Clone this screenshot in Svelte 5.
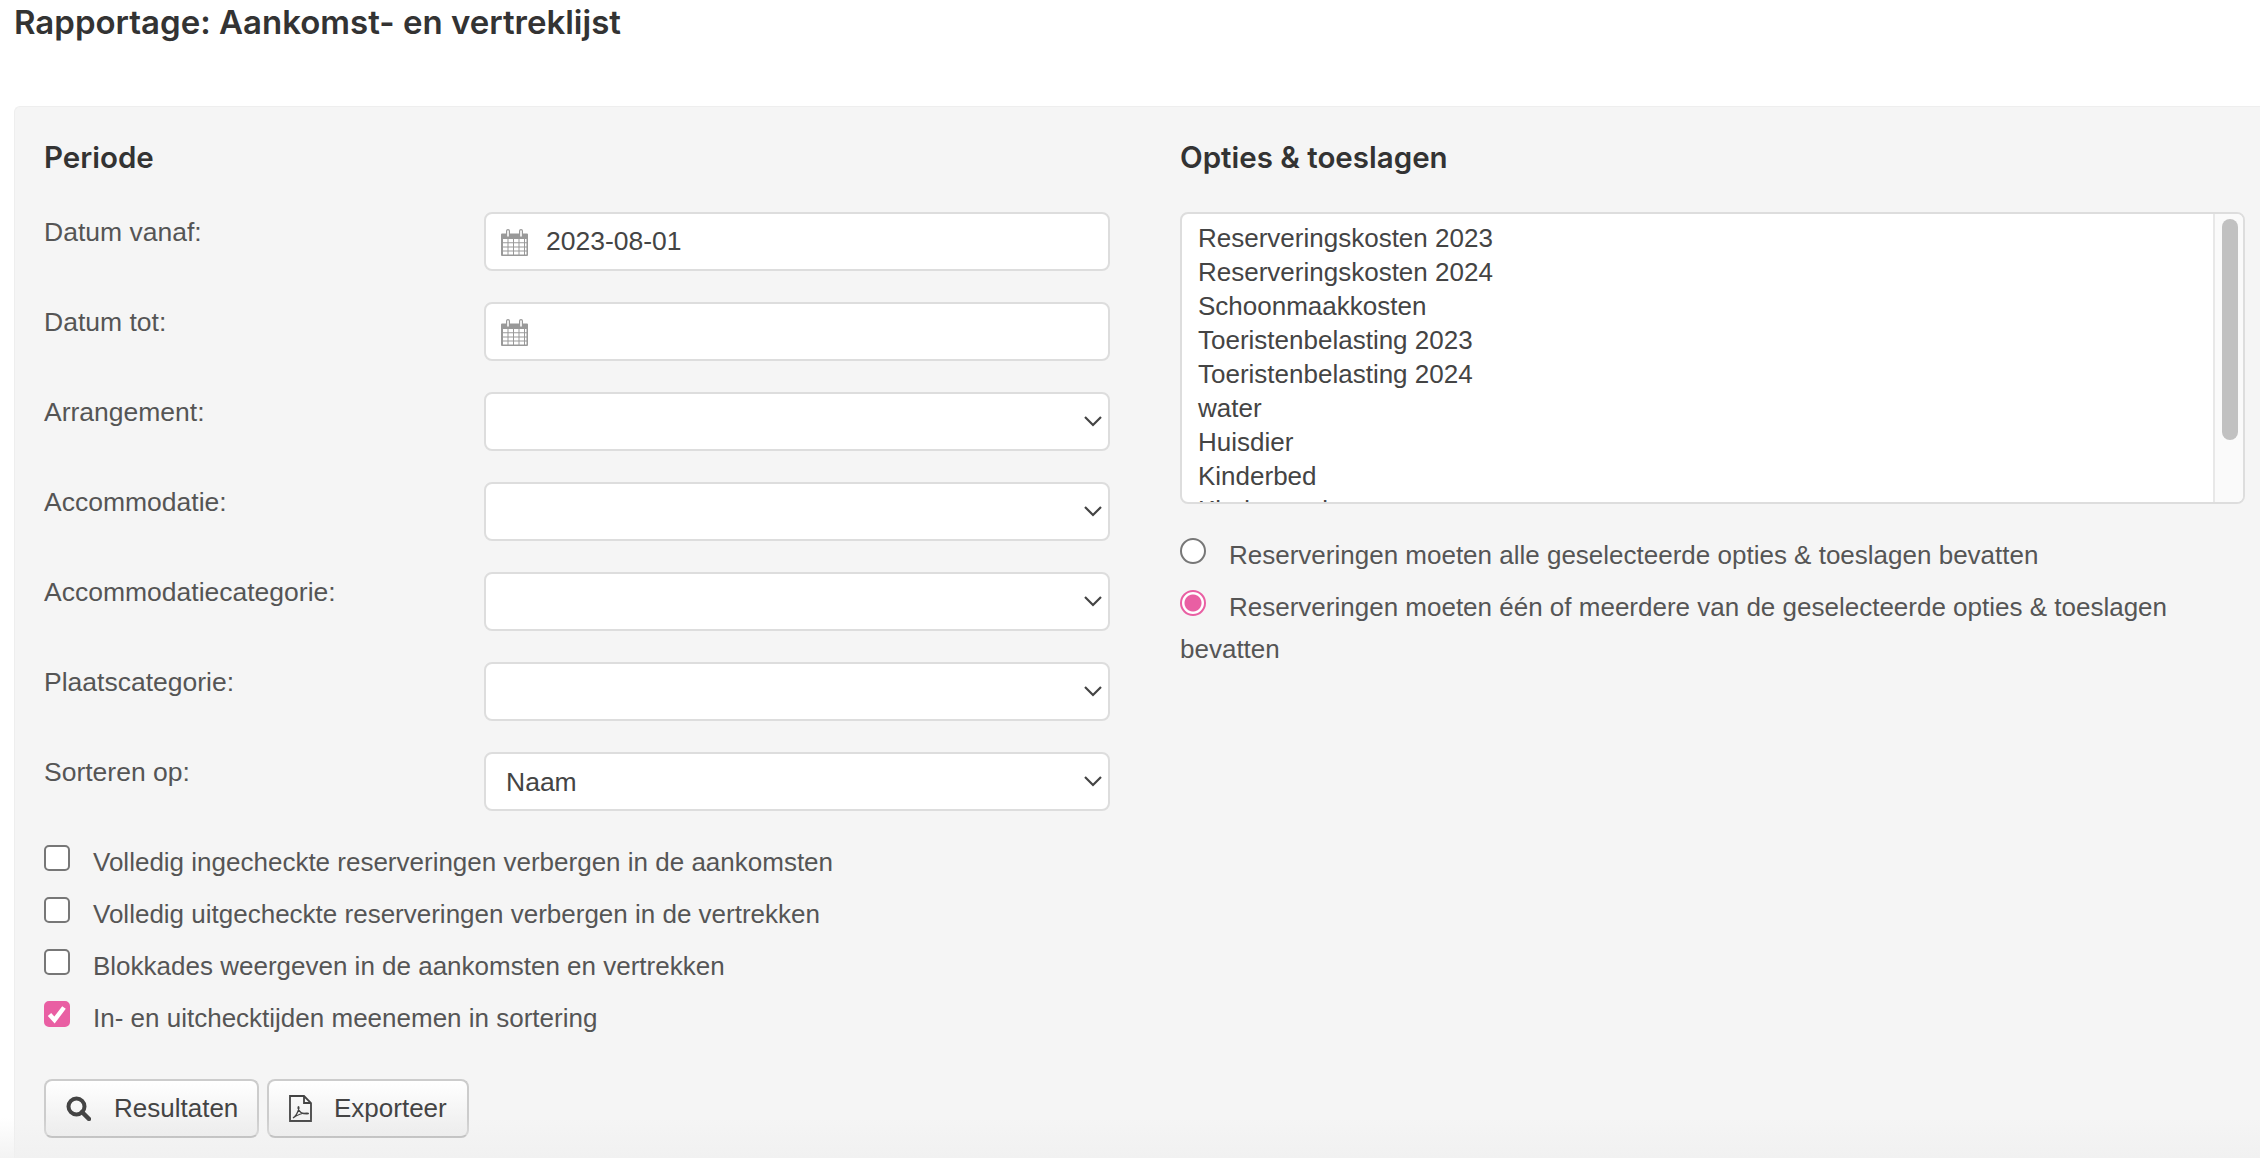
<script lang="ts">
  const rows = [
    { label: 'Datum vanaf:', kind: 'date', value: '2023-08-01' },
    { label: 'Datum tot:', kind: 'date', value: '' },
    { label: 'Arrangement:', kind: 'select', value: '' },
    { label: 'Accommodatie:', kind: 'select', value: '' },
    { label: 'Accommodatiecategorie:', kind: 'select', value: '' },
    { label: 'Plaatscategorie:', kind: 'select', value: '' },
    { label: 'Sorteren op:', kind: 'select', value: 'Naam' },
  ];

  const checks = [
    { label: 'Volledig ingecheckte reserveringen verbergen in de aankomsten', on: false },
    { label: 'Volledig uitgecheckte reserveringen verbergen in de vertrekken', on: false },
    { label: 'Blokkades weergeven in de aankomsten en vertrekken', on: false },
    { label: 'In- en uitchecktijden meenemen in sortering', on: true },
  ];

  const options = [
    'Reserveringskosten 2023',
    'Reserveringskosten 2024',
    'Schoonmaakkosten',
    'Toeristenbelasting 2023',
    'Toeristenbelasting 2024',
    'water',
    'Huisdier',
    'Kinderbed',
    'Kinderstoel',
  ];
</script>

<div class="page">
  <h1>Rapportage: Aankomst- en vertreklijst</h1>

  <div class="panel">
    <section class="left">
      <h2>Periode</h2>

      {#each rows as row}
        <div class="row">
          <span class="label">{row.label}</span>
          <div class="field">
            {#if row.kind === 'date'}
              <svg class="cal" width="27" height="28" viewBox="0 0 27 28">
                <path fill="#999" d="M1 5.5h4V3a2 2 0 0 1 4 0v2.5h9V3a2 2 0 0 1 4 0v2.5h4a1 1 0 0 1 1 1V27a1 1 0 0 1-1 1H1a1 1 0 0 1-1-1V6.5a1 1 0 0 1 1-1z"/>
                <path fill="#fff" d="M6.2 2.6h1.6v6H6.200zM19.200 2.600h1.600v6h-1.600z"/>
                <path fill="#fff" d="M2 11h4.500v3.200H2zM7.500 11H12v3.200H7.500zM13 11h4.500v3.200H13zM18.500 11H23v3.200h-4.500zM24 11h1.500v3.200H24zM2 15.200h4.500v3.200H2zM7.500 15.200H12v3.200H7.500zM13 15.200h4.500v3.200H13zM18.500 15.200H23v3.200h-4.500zM24 15.200h1.500v3.200H24zM2 19.400h4.500v3.200H2zM7.500 19.400H12v3.200H7.500zM13 19.400h4.500v3.200H13zM18.500 19.400H23v3.200h-4.500zM24 19.400h1.500v3.200H24zM2 23.600h4.500v3H2zM7.500 23.600H12v3H7.500zM13 23.600h4.500v3H13zM18.500 23.600H23v3h-4.500zM24 23.600h1.500v3H24z"/>
              </svg>
              <span class="date-value">{row.value}</span>
            {:else}
              <span class="select-value">{row.value}</span>
              <svg class="chev" width="18" height="11" viewBox="0 0 18 11">
                <path d="M1 1l8 8 8-8" fill="none" stroke="#444" stroke-width="2.200"/>
              </svg>
            {/if}
          </div>
        </div>
      {/each}

      <div class="checks">
        {#each checks as check}
          <div class="check">
            <span class="box" class:on={check.on}>
              {#if check.on}
                <svg width="20" height="20" viewBox="0 0 20 20">
                  <path d="M2.500 10.500l5 5.500L17 3.500" fill="none" stroke="#fff" stroke-width="4.500"/>
                </svg>
              {/if}
            </span>
            <span class="check-label">{check.label}</span>
          </div>
        {/each}
      </div>

      <div class="buttons">
        <button class="btn">
          <svg width="25" height="25" viewBox="0 0 25 25">
            <circle cx="10.500" cy="10.500" r="8" fill="none" stroke="#444" stroke-width="4"/>
            <path d="M16 16l7 7" stroke="#444" stroke-width="4.500" stroke-linecap="round"/>
          </svg>
          <span>Resultaten</span>
        </button>
        <button class="btn export">
          <svg width="23" height="27" viewBox="0 0 23 27">
            <path d="M1 1h14l7 7v18H1z" fill="none" stroke="#444" stroke-width="1.800"/>
            <path d="M15 1v7h7" fill="none" stroke="#444" stroke-width="1.800"/>
            <path d="M4 23c3-2 5-6 6-10 0-2-1-2-1 0 1 4 4 6 9 6 2 0 2-1 0-1-5 0-10 2-14 5z" fill="none" stroke="#444" stroke-width="1.200"/>
          </svg>
          <span>Exporteer</span>
        </button>
      </div>
    </section>

    <section class="right">
      <h2>Opties &amp; toeslagen</h2>

      <div class="listbox">
        <div class="list-items">
          {#each options as option}
            <div class="list-item">{option}</div>
          {/each}
        </div>
        <div class="track"><div class="thumb"></div></div>
      </div>

      <div class="radios">
        <div class="radio-line">
          <span class="radio"></span><span class="radio-label">Reserveringen moeten alle geselecteerde opties &amp; toeslagen bevatten</span>
        </div>
        <div class="radio-line">
          <span class="radio on"></span><span class="radio-label">Reserveringen moeten één of meerdere van de geselecteerde opties &amp; toeslagen bevatten</span>
        </div>
      </div>
    </section>
  </div>

  <div class="fade"></div>
</div>

<style>
  :global(body) {
    margin: 0;
    background: #fff;
  }

  .page {
    position: relative;
    width: 2260px;
    height: 1158px;
    overflow: hidden;
    box-sizing: border-box;
    padding: 0 0 0 14px;
    font-family: "Liberation Sans", Arial, sans-serif;
    font-size: 26px;
    color: #555;
  }

  h1 {
    margin: 0;
    height: 106px;
    box-sizing: border-box;
    padding-top: 1px;
    font-family: Inter, Lato, sans-serif;
    font-size: 33px;
    line-height: 42px;
    font-weight: 600;
    color: #333;
  }

  h2 {
    margin: 0;
    font-family: Inter, Lato, sans-serif;
    font-size: 29.5px;
    line-height: 36px;
    font-weight: 600;
    color: #333;
    height: 105px;
    box-sizing: border-box;
    padding-top: 32px;
  }

  .panel {
    display: flex;
    height: 1100px;
    background: #f5f5f5;
    border: 1px solid #eee;
    border-right: 0;
    border-radius: 6px 0 0 0;
    box-sizing: border-box;
  }

  .left {
    width: 1096px;
    padding-left: 29px;
    box-sizing: border-box;
  }

  .right {
    width: 1065px;
    margin-left: 69px;
  }

  .row {
    display: flex;
    height: 59px;
    margin-bottom: 31px;
  }

  .label {
    width: 440px;
    line-height: 40px;
    font-size: 26.5px;
    flex-shrink: 0;
  }

  .field {
    width: 626px;
    height: 59px;
    box-sizing: border-box;
    display: flex;
    align-items: center;
    background: #fff;
    border: 2px solid #ddd;
    border-radius: 8px;
    position: relative;
    color: #444;
    font-size: 26.5px;
  }

  .cal {
    margin-left: 15px;
    flex-shrink: 0;
  }

  .date-value {
    margin-left: 18px;
  }

  .select-value {
    margin-left: 20px;
    flex: 1;
    padding-top: 1px;
  }

  .chev {
    margin-right: 6px;
  }

  .checks {
    margin-top: 34px;
  }

  .check {
    display: flex;
    height: 52px;
  }

  .box {
    width: 26px;
    height: 26px;
    box-sizing: border-box;
    background: #fff;
    border: 2px solid #777;
    border-radius: 5px;
    flex-shrink: 0;
    display: flex;
    align-items: center;
    justify-content: center;
  }

  .box.on {
    background: #e95fa3;
    border-color: #e95fa3;
  }

  .check-label {
    margin-left: 23px;
    line-height: 34px;
  }

  .buttons {
    display: flex;
    gap: 8px;
    margin-top: 26px;
  }

  .btn {
    display: flex;
    align-items: center;
    width: 215px;
    height: 59px;
    box-sizing: border-box;
    padding: 0 0 0 20px;
    gap: 23px;
    font: inherit;
    color: #444;
    background: linear-gradient(#fff, #ececec);
    border: 2px solid #ccc;
    border-bottom-color: #aaa;
    border-radius: 8px;
  }

  .btn.export {
    width: 202px;
    gap: 22px;
  }

  .listbox {
    display: flex;
    width: 1065px;
    height: 292px;
    box-sizing: border-box;
    background: #fff;
    border: 2px solid #ddd;
    border-radius: 8px;
    overflow: hidden;
    color: #444;
  }

  .list-items {
    flex: 1;
    overflow: hidden;
    padding: 7px 0 0 16px;
  }

  .list-item {
    line-height: 34px;
    height: 34px;
  }

  .track {
    width: 30px;
    flex-shrink: 0;
    box-sizing: border-box;
    background: #fafafa;
    border-left: 2px solid #e8e8e8;
    padding: 5px 0 0 7px;
  }

  .thumb {
    width: 16px;
    height: 221px;
    border-radius: 8px;
    background: #c1c1c1;
  }

  .radios {
    margin-top: 30px;
  }

  .radio-line {
    line-height: 42px;
    margin-bottom: 10px;
  }

  .radio {
    display: inline-block;
    width: 26px;
    height: 26px;
    box-sizing: border-box;
    border: 2px solid #777;
    border-radius: 50%;
    background: #fff;
    margin-right: 23px;
    vertical-align: 0;
  }

  .radio.on {
    border-color: #e95fa3;
    background: radial-gradient(circle, #e95fa3 0 8px, #fff 9px);
  }

  .fade {
    position: absolute;
    left: 0;
    right: 0;
    bottom: 0;
    height: 40px;
    background: linear-gradient(rgba(240, 240, 240, 0), rgba(240, 240, 240, 0.8));
    pointer-events: none;
  }
</style>
